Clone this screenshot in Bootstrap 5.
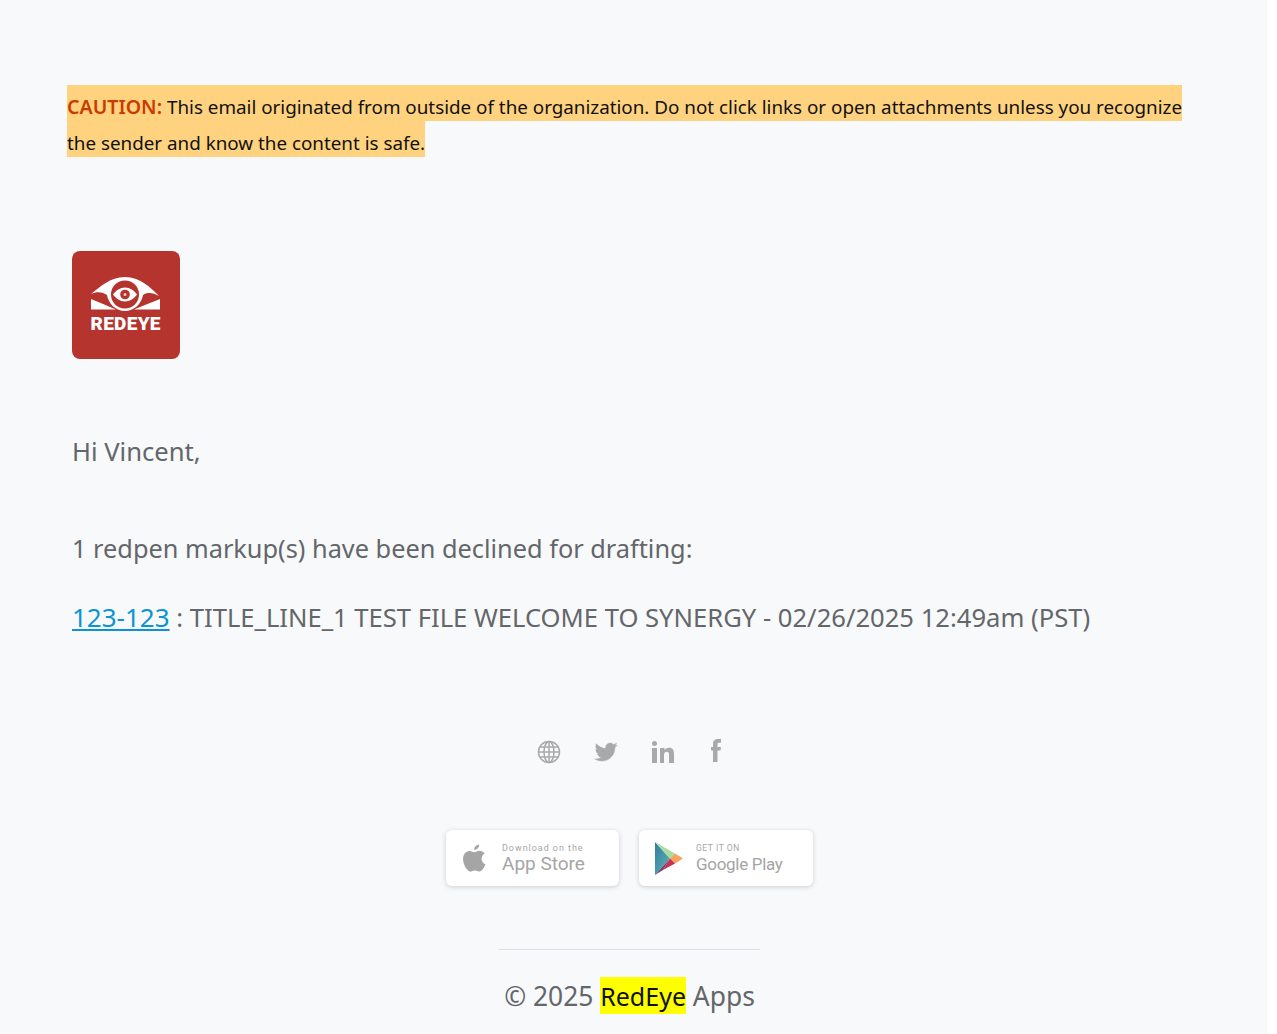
<!doctype html>
<html lang="en"><head><meta charset="utf-8"><title>RedEye</title>
<link href="https://cdn.jsdelivr.net/npm/bootstrap@5.3.0/dist/css/bootstrap.min.css" rel="stylesheet">
<style>
html,body{height:100%}
body{background:#fff;font-family:"Noto Sans","Open Sans",sans-serif;color:#63666a;overflow:hidden}
.pageshell{width:1267px;height:100%;background:#f8f9fb}
.mailwrap{padding:89px 0 0 67px;width:1188px}
.warn{font-size:18.82px;line-height:36px;color:#111;white-space:nowrap}
.warn span{background:#ffd27f;padding:9px 0 1px}
.warn b{color:#c83c00;font-weight:600;font-size:19.6px}
.logobox{width:108px;height:108px;background:#b5342e;border-radius:8px;margin:90px 0 0 5px}
.logobox svg{display:block}
.bigtxt{font-size:25.6px;line-height:36px;margin:0 0 0 5px;white-space:nowrap}
.l1{margin-top:75px}.l2{margin-top:60px;font-size:25.33px}.l3{margin-top:33px}
.bigtxt a{color:#0a94d6;font-size:26px}
.footerzone{margin-left:4px;text-align:center}
.socials{height:30px;margin-top:101px;gap:33px}
.fb{margin:0 0 3px 2px}
.stores{margin-top:63px;gap:20px}
.storebtn{width:173px;height:56px;background:#fff;border-radius:6px;box-shadow:0 1px 5px rgba(0,0,0,.18);color:#a5a5a5;text-align:left;font-family:Roboto,sans-serif}
.storebtn.gp{width:174px}
.storetxt{padding-top:2px}
.s1{font-size:9px;line-height:10px;letter-spacing:.95px}
.s2{font-size:19px;line-height:22px}
.gp .s1{font-size:8.5px;letter-spacing:.55px}
.gp .s2{font-size:17px;letter-spacing:-.3px}
.gap-apple{gap:15px}.gap-play{gap:13px}
.divline{width:261px;height:1px;background:#dcdfe3;margin:63px auto 0}
.copy{font-size:26.4px;line-height:36px;margin-top:28px}
.copy span{background:#ff0;color:#111;font-size:25px;padding:2px 0 1px}
</style></head><body>
<div class="pageshell">
<div class="mailwrap">
<div class="warn"><span><b>CAUTION:</b> This email originated from outside of the organization. Do not click links or open attachments unless you recognize<br>the sender and know the content is safe.</span></div>
<div class="logobox"><svg width="108" height="108" viewBox="0 0 108 108">
<path fill="#fff" d="M19 43C28 36 38 26 53 26C68 26 78 36 87 45C81 41.500 75 41 71 44C69.500 53 62 60 53 60C44 60 36.500 53 35 44C31 41 25 40 19 43Z"/>
<circle cx="53" cy="43.500" r="14" fill="#b5342e"/>
<path fill="#fff" d="M41 43.500C44 39.500 48 36.500 53 36.500C58 36.500 62 39.500 65 43.500C62 47.500 58 50.500 53 50.500C48 50.500 44 47.500 41 43.500Z"/>
<circle cx="53" cy="43.500" r="4.800" fill="#b5342e"/><circle cx="53" cy="43.500" r="1.500" fill="#e8c8c6"/>
<path fill="#fff" d="M19 48C27 51 35 55 44 58.500H19ZM88 48V58.500H62C71 55 80 51 88 48Z"/>
<text x="18.500" y="78.500" textLength="70" font-family="Roboto,sans-serif" font-weight="900" font-size="19" fill="#fff">REDEYE</text>
</svg></div>
<p class="bigtxt l1">Hi Vincent,</p>
<p class="bigtxt l2">1 redpen markup(s) have been declined for drafting:</p>
<p class="bigtxt l3"><a href="#">123-123</a> : TITLE_LINE_1 TEST FILE WELCOME TO SYNERGY - 02/26/2025 12:49am (PST)</p>
<div class="footerzone">
<div class="socials d-flex justify-content-center align-items-center">
<svg width="24" height="24" viewBox="0 0 24 24" fill="none" stroke="#a9a9a9" stroke-width="1.5"><circle cx="12" cy="12" r="10.500"/><ellipse cx="12" cy="12" rx="5" ry="10.500"/><path d="M12 1.500V22.500M1.500 12H22.500M3 7H21M3 17H21"/></svg>
<svg width="24" height="24" viewBox="-1 -1 26 26" fill="#a9a9a9" stroke="#a9a9a9" stroke-width=".6"><path d="M23.953 4.570a10 10 0 01-2.825.775 4.958 4.958 0 002.163-2.723c-.951.555-2.005.959-3.127 1.184a4.920 4.920 0 00-8.384 4.482C7.690 8.095 4.067 6.130 1.640 3.162a4.822 4.822 0 00-.666 2.475c0 1.710.870 3.213 2.188 4.096a4.904 4.904 0 01-2.228-.616v.060a4.923 4.923 0 003.946 4.827 4.996 4.996 0 01-2.212.085 4.936 4.936 0 004.604 3.417 9.867 9.867 0 01-6.102 2.105c-.390 0-.779-.023-1.170-.067a13.995 13.995 0 007.557 2.209c9.053 0 13.998-7.496 13.998-13.985 0-.210 0-.420-.015-.630A9.935 9.935 0 0024 4.590z"/></svg>
<svg width="24" height="24" viewBox="0 0 24 24" fill="#a9a9a9"><circle cx="3.500" cy="3.500" r="2.500"/><path d="M1 8h5v15H1zM9 8h4.500v2.200C14.400 8.700 16 7.700 18 7.700c4 0 5 2.600 5 6.300v9h-5v-8c0-2-.4-3.300-2.200-3.300-1.800 0-2.800 1.300-2.800 3.300v8H9z"/></svg>
<svg class="fb" width="12" height="25" viewBox="0 0 12 25" fill="#a9a9a9"><path d="M3 24V12.500H1V9h2V5.500C3 2.500 5 1 7.800 1H11v3.800H9c-1.200 0-1.500.5-1.500 1.700V9H11l-.5 3.500H7.500V24z"/></svg>
</div>
<div class="stores d-flex justify-content-center">
<div class="storebtn d-flex align-items-center gap-apple ps-3">
<svg width="25" height="30" viewBox="0 0 24 28" fill="#a5a5a5"><path d="M16.500 1c.2 2.600-2.200 5.300-4.800 5.100C11.400 3.500 14 1.200 16.500 1zM22.500 20c-1.200 3-3.400 7-5.800 7-1.500 0-2.300-1-4.200-1s-2.900 1-4.300 1C5 27 1 20.500 1 15c0-5 3.200-7.800 6.300-7.800 1.900 0 3.500 1.200 4.600 1.200 1.100 0 2.900-1.400 5-1.300 1.800.1 3.600.8 4.800 2.500-4.300 2.600-3.600 8.600.8 10.400z"/></svg>
<div class="storetxt"><div class="s1">Download on the</div><div class="s2">App Store</div></div>
</div>
<div class="storebtn gp d-flex align-items-center gap-play ps-3">
<svg width="28" height="33" viewBox="0 0 28 33"><defs><linearGradient id="gpa" x1="0" y1="0" x2="1" y2="1"><stop offset="0" stop-color="#2e7f9e"/><stop offset="1" stop-color="#63b4b4"/></linearGradient></defs><path fill="url(#gpa)" d="M0 0V33L15 16.500Z"/><path fill="#a9dca2" d="M0 0L20 11.500 15 16.500Z"/><path fill="#f5a35f" d="M20 11.500L28 16.500 20 21.500 15 16.500Z"/><path fill="#c8324c" d="M15 16.500L20 21.500 8 28Z"/><path fill="#7a3a78" d="M15 16.500L8 28 0 33Z"/></svg>
<div class="storetxt"><div class="s1">GET IT ON</div><div class="s2">Google Play</div></div>
</div>
</div>
<div class="divline"></div>
<div class="copy">© 2025 <span>RedEye</span> Apps</div>
</div>
</div>
</div>
</body></html>
